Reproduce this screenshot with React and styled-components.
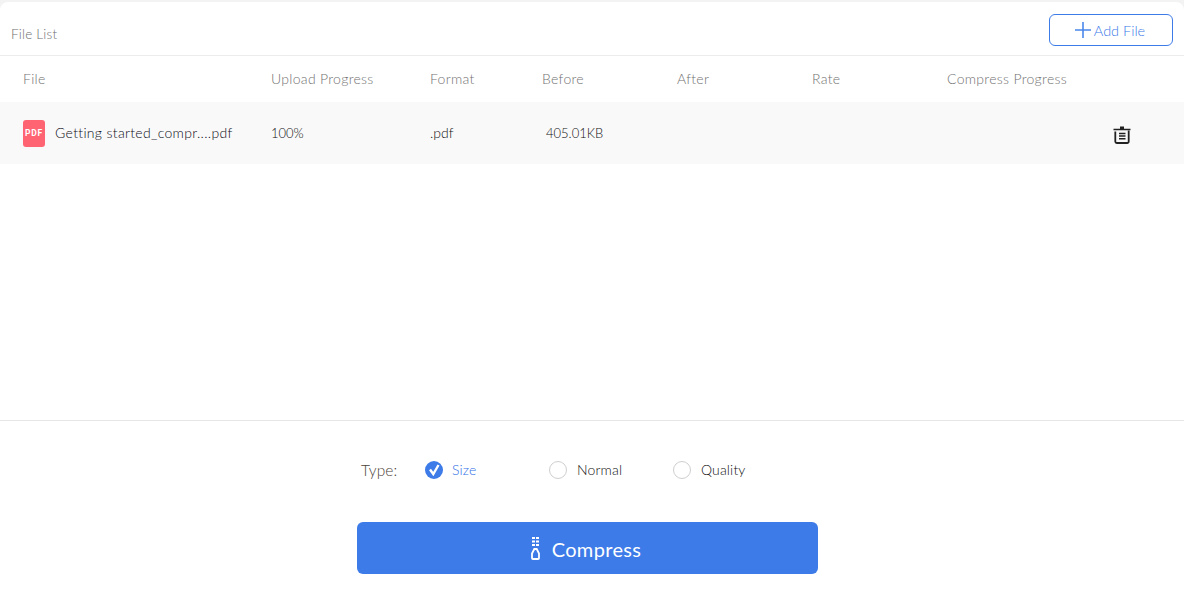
import React from "react";
import styled, { createGlobalStyle } from "styled-components";

const Global = createGlobalStyle`
  html, body { margin: 0; padding: 0; background: #f3f3f3; }
  body { font-family: Lato, "Open Sans", sans-serif; font-weight: 300; }
`;

const Page = styled.div`
  margin-top: 2px;
  width: 1184px;
  height: 605px;
  background: #fff;
  border-radius: 8px 8px 0 0;
  display: flex;
  flex-direction: column;
  overflow: hidden;
`;
const TopBar = styled.div`
  flex: none;
  box-sizing: border-box;
  border-bottom: 1px solid #ececec;
  height: 54px;
  display: flex;
  align-items: flex-start;
  justify-content: space-between;
  padding: 12px 11px 0 11px;
`;
const Title = styled.div`
  font-size: 13.5px;
  letter-spacing: 0.2px;
  color: #6f6f6f;
  margin-top: 12px;
  line-height: 16px;
`;
const AddButton = styled.button`
  width: 124px;
  height: 32px;
  box-sizing: border-box;
  border: 1px solid #3d7be8;
  border-radius: 6px;
  background: #fff;
  color: #3d7be8;
  font: 300 14.5px Lato, sans-serif;
  display: flex;
  align-items: center;
  justify-content: center;
  padding: 0 2px 0 0;
  gap: 3px;
`;
const Columns = "248px 159px 112px 135px 135px 135px 1fr";
const HeadRow = styled.div`
  display: grid;
  grid-template-columns: ${Columns};
  align-items: center;
  height: 46px;
  flex: none;
  padding: 0 0 2px 23px;
  box-sizing: border-box;
  font-size: 14px;
  letter-spacing: 0.3px;
  color: #727272;
`;
const FileRow = styled.div`
  display: grid;
  grid-template-columns: ${Columns};
  align-items: center;
  height: 62px;
  flex: none;
  padding-left: 23px;
  background: #f9f9f9;
  font-size: 14px;
  color: #111;
`;
const NameCell = styled.div`
  display: flex;
  align-items: center;
  gap: 10px;
  color: #0c0c18;
  white-space: nowrap;
  letter-spacing: 0.33px;
`;
const PdfBadge = styled.div`
  width: 22px;
  height: 27px;
  border-radius: 3px;
  background: #ff6472;
  color: #fff;
  font: 700 8.5px Roboto, sans-serif;
  letter-spacing: 0.7px;
  display: flex;
  align-items: center;
  justify-content: center;
`;
const Cell = styled.div`
  margin-top: -1px;
  padding-left: ${(p) => p.$indent || 0}px;
`;
const NumberCell = styled(Cell)`
  font-size: 13px;
`;
const ActionCell = styled.div`
  display: flex;
  padding-left: 166px;
  padding-top: 3px;
  align-items: center;
`;
const Spacer = styled.div`
  flex: 1;
  border-bottom: 1px solid #e6e6e6;
`;
const Footer = styled.div`
  height: 186px;
  flex: none;
  box-sizing: border-box;
  padding-left: 357px;
`;
const TypeRow = styled.div`
  display: flex;
  align-items: center;
  height: 20px;
  margin-top: 39px;
  padding-left: 4px;
  font-size: 14px;
  letter-spacing: 0.15px;
`;
const TypeLabel = styled.div`
  width: 64px;
  font-size: 15.5px;
  color: #4c4237;
  margin-top: -1px;
`;
const Option = styled.div`
  width: 124px;
  display: flex;
  align-items: center;
  gap: ${(p) => (p.$active ? 9 : 10)}px;
  color: ${(p) => (p.$active ? "#2f6fe6" : "#111")};
`;
const OptionText = styled.span`
  margin-top: -1px;
`;
const Radio = styled.div`
  width: 18px;
  height: 18px;
  box-sizing: border-box;
  border-radius: 50%;
  border: 1px solid #cfcfcf;
  background: #fff;
`;
const CheckedRadio = styled.svg`
  width: 18px;
  height: 18px;
  flex: none;
  display: block;
`;
const Compress = styled.button`
  margin-top: 42px;
  width: 461px;
  height: 52px;
  border: 0;
  border-radius: 6px;
  background: #3d7be8;
  color: #fff;
  font: 400 20px Lato, sans-serif;
  letter-spacing: 0.35px;
  display: flex;
  align-items: center;
  justify-content: center;
  gap: 11px;
  padding: 0 3px 0 0;
`;
const CompressLabel = styled.span`
  margin-top: 1px;
`;

const Plus = () => (
  <svg width="16" height="16" viewBox="0 0 16 16">
    <path d="M8 0v16M0 8h16" stroke="#4a86ea" strokeWidth="1.6" fill="none" />
  </svg>
);
const Trash = () => (
  <svg width="18" height="19" viewBox="0 0 18 19" fill="none">
    <path d="M0.500 4.500h17" stroke="#222" strokeWidth="1.7" />
    <path d="M7 4V1.500h4V4" fill="#222" />
    <path d="M2.300 6.500V16.500a1.500 1.500 0 0 0 1.500 1.500h10.400a1.500 1.500 0 0 0 1.500-1.500V5.500" stroke="#222" strokeWidth="1.8" />
    <path d="M6 8.500h6.500M6 11h6.500M6 13.700h6.500" stroke="#222" strokeWidth="1.5" />
  </svg>
);
const Zip = () => (
  <svg width="10" height="23" viewBox="0 0 10 23" fill="none">
    <path d="M1 0h3v2H1zM5 0h3v2H5zM1 3.500h3v2H1zM5 3.500h3v2H5zM1 7h3v2H1zM5 7h3v2H5z" fill="#fff" />
    <path d="M3.300 12h2.400l2.300 4.500V21a1 1 0 0 1-1 1H2a1 1 0 0 1-1-1v-4.500z" stroke="#fff" strokeWidth="1.800" />
  </svg>
);

export default function App() {
  return (
    <>
      <Global />
      <Page>
        <TopBar>
          <Title>File List</Title>
          <AddButton>
            <Plus />
            Add File
          </AddButton>
        </TopBar>
        <HeadRow>
          <div>File</div>
          <div>Upload Progress</div>
          <div>Format</div>
          <div>Before</div>
          <div>After</div>
          <div>Rate</div>
          <div>Compress Progress</div>
        </HeadRow>
        <FileRow>
          <NameCell>
            <PdfBadge>PDF</PdfBadge>
            <Cell>Getting started_compr....pdf</Cell>
          </NameCell>
          <NumberCell>100%</NumberCell>
          <Cell>.pdf</Cell>
          <NumberCell $indent={4}>405.01KB</NumberCell>
          <div />
          <div />
          <ActionCell>
            <Trash />
          </ActionCell>
        </FileRow>
        <Spacer />
        <Footer>
          <TypeRow>
            <TypeLabel>Type:</TypeLabel>
            <Option $active>
              <CheckedRadio viewBox="0 0 18 18">
                <circle cx="9" cy="9" r="9" fill="#3d7be8" />
                <path d="M5 8.500l3.300 4.500L13.500 4" stroke="#fff" strokeWidth="2.400" fill="none" />
              </CheckedRadio>
              <OptionText>Size</OptionText>
            </Option>
            <Option>
              <Radio />
              <OptionText>Normal</OptionText>
            </Option>
            <Option>
              <Radio />
              <OptionText>Quality</OptionText>
            </Option>
          </TypeRow>
          <Compress>
            <Zip />
            <CompressLabel>Compress</CompressLabel>
          </Compress>
        </Footer>
      </Page>
    </>
  );
}
